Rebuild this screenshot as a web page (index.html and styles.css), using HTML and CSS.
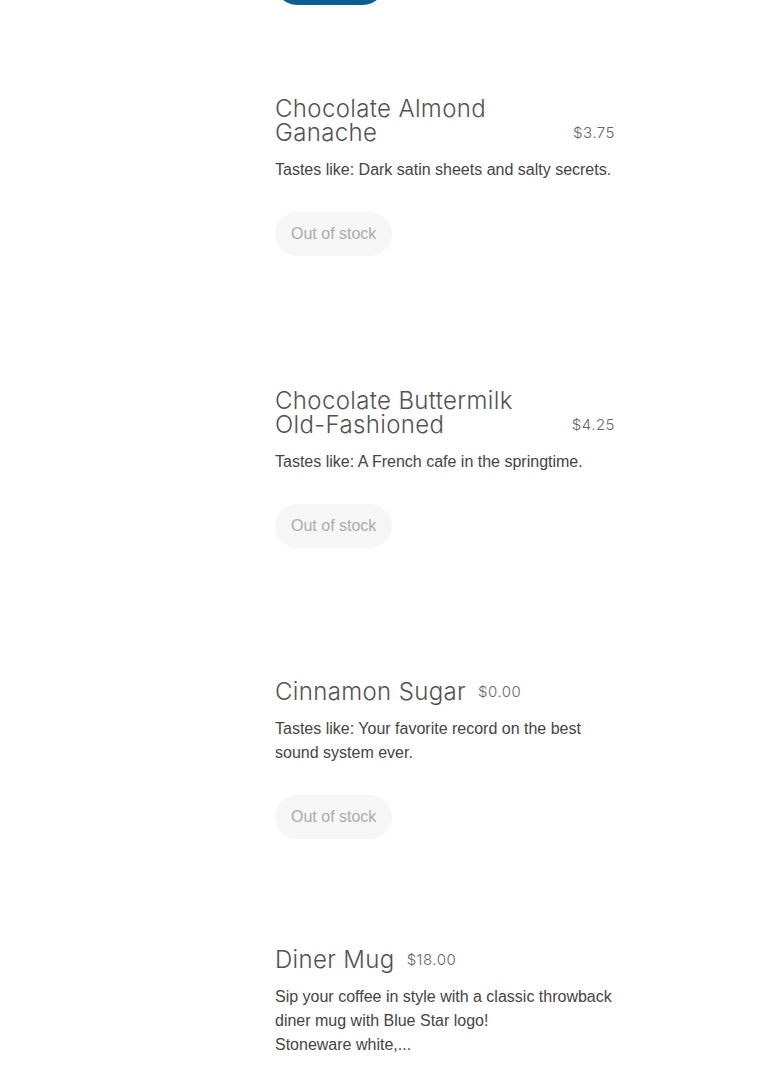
FILE: index.html
```html
<!DOCTYPE html>
<html lang="en">
<head>
<meta charset="utf-8">
<title>Menu</title>
<link rel="stylesheet" href="styles.css">
</head>
<body>
<main class="menu">
  <div class="prev-actions">
    <button class="btn btn-primary" type="button">Add to cart</button>
  </div>

  <article class="product">
    <div class="product-media"></div>
    <div class="product-body">
      <div class="product-head">
        <h2 class="product-title">Chocolate Almond Ganache</h2>
        <span class="product-price">$3.75</span>
      </div>
      <p class="product-desc">Tastes like: Dark satin sheets and salty secrets.</p>
      <button class="btn btn-disabled" type="button" disabled>Out of stock</button>
    </div>
  </article>

  <article class="product">
    <div class="product-media"></div>
    <div class="product-body">
      <div class="product-head">
        <h2 class="product-title">Chocolate Buttermilk Old-Fashioned</h2>
        <span class="product-price">$4.25</span>
      </div>
      <p class="product-desc">Tastes like: A French cafe in the springtime.</p>
      <button class="btn btn-disabled" type="button" disabled>Out of stock</button>
    </div>
  </article>

  <article class="product">
    <div class="product-media"></div>
    <div class="product-body">
      <div class="product-head">
        <h2 class="product-title">Cinnamon Sugar</h2>
        <span class="product-price">$0.00</span>
      </div>
      <p class="product-desc">Tastes like: Your favorite record on the best sound system ever.</p>
      <button class="btn btn-disabled" type="button" disabled>Out of stock</button>
    </div>
  </article>

  <article class="product">
    <div class="product-media"></div>
    <div class="product-body">
      <div class="product-head">
        <h2 class="product-title">Diner Mug</h2>
        <span class="product-price">$18.00</span>
      </div>
      <p class="product-desc">Sip your coffee in style with a classic throwback diner mug with Blue Star logo!<br>Stoneware white,...</p>
      <button class="btn btn-disabled" type="button" disabled>Out of stock</button>
    </div>
  </article>
</main>
</body>
</html>
```

FILE: styles.css
```css
html, body {
  margin: 0;
  padding: 0;
  background: #ffffff;
}

body {
  font-family: "Liberation Sans", Arial, sans-serif;
  color: #444444;
  overflow: hidden;
}

.menu {
  width: 770px;
}

.prev-actions {
  margin-top: -39px;
  padding-left: 275px;
}

.product {
  display: grid;
  grid-template-columns: 251px 340px;
  column-gap: 24px;
  height: 291.5px;
  box-sizing: border-box;
  padding-bottom: 40.5px;
}

.product-body {
  display: flex;
  flex-direction: column;
  justify-content: flex-end;
  align-items: flex-start;
}

.product-head {
  display: flex;
  align-items: flex-end;
  gap: 12px;
  width: 100%;
}

.product-title {
  margin: 0;
  font-family: Inter, "Open Sans", sans-serif;
  font-weight: 300;
  font-size: 24px;
  line-height: 24px;
  color: #525252;
  letter-spacing: 0.35px;
}

.product-price {
  flex: none;
  margin-left: auto;
  font-family: Inter, "Open Sans", sans-serif;
  font-weight: 300;
  font-size: 15px;
  line-height: 24px;
  letter-spacing: 0.5px;
  color: #666666;
  white-space: nowrap;
}

.product-head .product-title + .product-price {
  margin-left: 0;
}

.product-desc {
  margin: 13px 0 0;
  font-size: 16px;
  line-height: 24px;
  color: #444444;
}

.btn {
  display: inline-block;
  height: 44px;
  padding: 0 16px;
  border: 0;
  border-radius: 22px;
  font-family: "Liberation Sans", Arial, sans-serif;
  font-size: 16px;
  line-height: 44px;
  cursor: pointer;
}

.product-body .btn {
  margin-top: 30px;
}

.btn-primary {
  width: 110px;
  background: #0c5e92;
  color: #ffffff;
}

.btn-disabled {
  background: #f6f6f6;
  color: #ababab;
  cursor: default;
}
```
